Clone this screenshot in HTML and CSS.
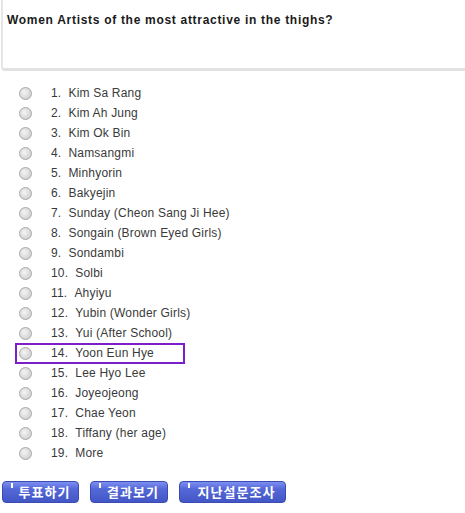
FILE: index.html
```html
<!DOCTYPE html>
<html>
<head>
<meta charset="utf-8">
<link rel="stylesheet" href="styles.css">
</head>
<body>
<div class="question">Women Artists of the most attractive in the thighs?</div>
<ul class="options">
  <li class="opt"><span class="radio"></span><span class="num">1.</span><span class="name">Kim Sa Rang</span></li>
  <li class="opt"><span class="radio"></span><span class="num">2.</span><span class="name">Kim Ah Jung</span></li>
  <li class="opt"><span class="radio"></span><span class="num">3.</span><span class="name">Kim Ok Bin</span></li>
  <li class="opt"><span class="radio"></span><span class="num">4.</span><span class="name">Namsangmi</span></li>
  <li class="opt"><span class="radio"></span><span class="num">5.</span><span class="name">Minhyorin</span></li>
  <li class="opt"><span class="radio"></span><span class="num">6.</span><span class="name">Bakyejin</span></li>
  <li class="opt"><span class="radio"></span><span class="num">7.</span><span class="name">Sunday (Cheon Sang Ji Hee)</span></li>
  <li class="opt"><span class="radio"></span><span class="num">8.</span><span class="name">Songain (Brown Eyed Girls)</span></li>
  <li class="opt"><span class="radio"></span><span class="num">9.</span><span class="name">Sondambi</span></li>
  <li class="opt"><span class="radio"></span><span class="num">10.</span><span class="name">Solbi</span></li>
  <li class="opt"><span class="radio"></span><span class="num">11.</span><span class="name">Ahyiyu</span></li>
  <li class="opt"><span class="radio"></span><span class="num">12.</span><span class="name">Yubin (Wonder Girls)</span></li>
  <li class="opt"><span class="radio"></span><span class="num">13.</span><span class="name">Yui (After School)</span></li>
  <li class="opt highlight"><span class="radio"></span><span class="num">14.</span><span class="name">Yoon Eun Hye</span></li>
  <li class="opt"><span class="radio"></span><span class="num">15.</span><span class="name">Lee Hyo Lee</span></li>
  <li class="opt"><span class="radio"></span><span class="num">16.</span><span class="name">Joyeojeong</span></li>
  <li class="opt"><span class="radio"></span><span class="num">17.</span><span class="name">Chae Yeon</span></li>
  <li class="opt"><span class="radio"></span><span class="num">18.</span><span class="name">Tiffany (her age)</span></li>
  <li class="opt"><span class="radio"></span><span class="num">19.</span><span class="name">More</span></li>
</ul>
<div class="buttons">
  <span class="btn b1">투표하기</span>
  <span class="btn b2">결과보기</span>
  <span class="btn b3">지난설문조사</span>
</div>
</body>
</html>
```
FILE: styles.css
```css
html, body {
  margin: 0;
  padding: 0;
  background: #ffffff;
}
body {
  width: 465px;
  height: 513px;
  overflow: hidden;
  font-family: "Liberation Sans", Arial, "Noto Sans CJK KR", sans-serif;
}
.question {
  margin-left: 1px;
  height: 56px;
  padding: 12px 0 0 4px;
  border-left: 2px solid #e6e6e6;
  border-bottom: 3px solid #e2e2e2;
  border-bottom-left-radius: 4px;
  font-size: 12px;
  font-weight: bold;
  letter-spacing: 0.7px;
  color: #1a1a1a;
  line-height: 16px;
}
.options {
  list-style: none;
  margin: 12px 0 0 0;
  padding: 0;
}
.opt {
  display: flex;
  align-items: center;
  height: 20px;
  font-size: 12px;
  color: #3a3a3a;
  letter-spacing: 0.2px;
}
.radio {
  box-sizing: border-box;
  width: 13px;
  height: 13px;
  margin-left: 19px;
  margin-right: 19px;
  border-radius: 50%;
  border: 1px solid #a8a8a8;
  background: radial-gradient(circle at 40% 40%, #f4f4f4 0%, #d8d8d8 60%, #c4c4c4 100%);
  flex: none;
}
.num {
  margin-right: 7px;
}
.highlight {
  position: relative;
}
.highlight::after {
  content: "";
  position: absolute;
  left: 15px;
  top: 0;
  width: 170px;
  height: 21px;
  box-sizing: border-box;
  border: 2px solid #7b1fc9;
}
.buttons {
  display: flex;
  margin: 18px 0 0 2px;
  gap: 11px;
}
.btn {
  position: relative;
  box-sizing: border-box;
  height: 22px;
  padding-left: 8px;
  border-radius: 4px;
  background: linear-gradient(#7e8ef0 0%, #5468d8 35%, #4256c6 100%);
  border: 1px solid #3a4cb4;
  color: #ffffff;
  font-weight: bold;
  font-size: 13px;
  letter-spacing: 1px;
  line-height: 20px;
  text-align: center;
  font-family: "Noto Sans CJK KR", sans-serif;
}
.btn::before {
  content: "";
  position: absolute;
  left: 8px;
  top: 1px;
  width: 2px;
  height: 5px;
  background: #ffffff;
}
.b1 { width: 77px; }
.b2 { width: 78px; }
.b3 { width: 107px; }
```
